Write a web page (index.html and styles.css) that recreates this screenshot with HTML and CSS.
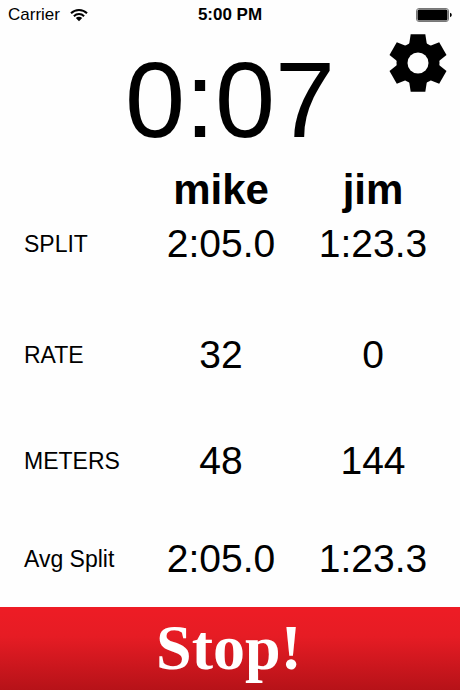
FILE: index.html
```html
<!DOCTYPE html>
<html lang="en">
<head>
    <meta charset="UTF-8">
    <meta name="viewport" content="width=device-width, initial-scale=1.0">
    <title>Race</title>
    <link rel="stylesheet" href="styles.css">
</head>
<body>
    <div class="status">
        <div class="carrier">
            <span>Carrier</span>
            <svg width="18" height="14" viewBox="0 0 18 14" aria-hidden="true">
                <g fill="none" stroke="#000" stroke-width="2">
                    <path d="M1 5.2a11.3 11.3 0 0 1 16 0"/>
                    <path d="M3.9 8.2a7.2 7.2 0 0 1 10.2 0"/>
                </g>
                <path d="M9 13.2L5.8 10a4.5 4.5 0 0 1 6.4 0z"/>
            </svg>
        </div>
        <strong class="clock">5:00 PM</strong>
        <svg class="battery" width="36" height="15" viewBox="0 0 36 15" aria-hidden="true">
            <rect x=".5" y=".5" width="32" height="13" rx="2.5" fill="none" stroke="#777"/>
            <rect x="1.5" y="1.5" width="30" height="11" rx="1.5"/>
            <path d="M34 4.8q1.8.6 1.8 2.2T34 9.2z"/>
        </svg>
    </div>
    <header>
        <h1 class="timer">0:07</h1>
        <button type="button" class="settings" aria-label="Settings">
            <svg width="58" height="58" viewBox="-29 -29 58 58" aria-hidden="true">
                <defs>
                    <path id="tooth" d="M-7.3 -28.7H7.3L9 -18V0H-9V-18z"/>
                </defs>
                <mask id="hole">
                    <rect x="-29" y="-29" width="58" height="58" fill="#fff"/>
                    <circle r="10.5" fill="#000"/>
                </mask>
                <g mask="url(#hole)">
                    <circle r="21.5"/>
                    <use href="#tooth"/>
                    <use href="#tooth" transform="rotate(60)"/>
                    <use href="#tooth" transform="rotate(120)"/>
                    <use href="#tooth" transform="rotate(180)"/>
                    <use href="#tooth" transform="rotate(240)"/>
                    <use href="#tooth" transform="rotate(300)"/>
                </g>
            </svg>
        </button>
    </header>
    <main>
        <table class="stats">
            <thead>
                <tr>
                    <td class="label"></td>
                    <th scope="col">mike</th>
                    <th scope="col">jim</th>
                </tr>
            </thead>
            <tbody>
                <tr class="split">
                    <th scope="row">SPLIT</th>
                    <td>2:05.0</td>
                    <td>1:23.3</td>
                </tr>
                <tr class="rate">
                    <th scope="row">RATE</th>
                    <td>32</td>
                    <td>0</td>
                </tr>
                <tr class="meters">
                    <th scope="row">METERS</th>
                    <td>48</td>
                    <td>144</td>
                </tr>
                <tr class="average">
                    <th scope="row">Avg Split</th>
                    <td>2:05.0</td>
                    <td>1:23.3</td>
                </tr>
            </tbody>
        </table>
    </main>
    <button type="button" class="stop">Stop!</button>
</body>
</html>
```
FILE: styles.css
```css
* {
    box-sizing: border-box;
}
body {
    margin: 0;
    min-height: 100vh;
    display: flex;
    flex-direction: column;
    font-family: "Liberation Sans", Arial, sans-serif;
    color: #000;
    background-color: #fefefe;
}
.status {
    display: grid;
    grid-template-columns: 1fr auto 1fr;
    align-items: center;
    height: 30px;
    padding: 0 8px;
    font-size: 17px;
}
.carrier {
    display: flex;
    align-items: center;
    gap: 10px;
}
.battery {
    justify-self: end;
}
header {
    display: grid;
    grid-template-columns: 1fr auto 1fr;
    padding: 4px 13px 16px;
}
.timer {
    grid-column: 2;
    margin: 12px 0 0;
    font-size: 108px;
    font-weight: normal;
    line-height: 108px;
}
.settings {
    justify-self: end;
    align-self: start;
    padding: 0;
    border: none;
    background: none;
    cursor: pointer;
}
.settings svg {
    display: block;
}
main {
    flex: 1;
    padding: 0 11px 24px 24px;
}
.stats {
    width: 100%;
    table-layout: fixed;
    border-collapse: collapse;
}
.stats th, .stats td {
    padding: 0;
    text-align: center;
}
.stats .label {
    width: 121px;
}
.stats thead th {
    font-size: 42px;
    line-height: 40px;
}
.stats tbody td {
    font-size: 39px;
    line-height: 48px;
}
.stats tbody th {
    font-size: 23px;
    font-weight: normal;
    line-height: 48px;
    text-align: left;
    white-space: nowrap;
}
.stats .split > * {
    padding-top: 10px;
}
.stats .rate > * {
    padding-top: 63px;
}
.stats .meters > * {
    padding-top: 58px;
}
.stats .average > * {
    padding-top: 50px;
}
.stop {
    height: 84px;
    padding: 0 2px 2px 0;
    border: none;
    color: white;
    background: linear-gradient(#ee1c25, #e61c24 35%, #b51218);
    font-family: "Liberation Serif", Georgia, serif;
    font-size: 64px;
    font-weight: bold;
    cursor: pointer;
}
```
